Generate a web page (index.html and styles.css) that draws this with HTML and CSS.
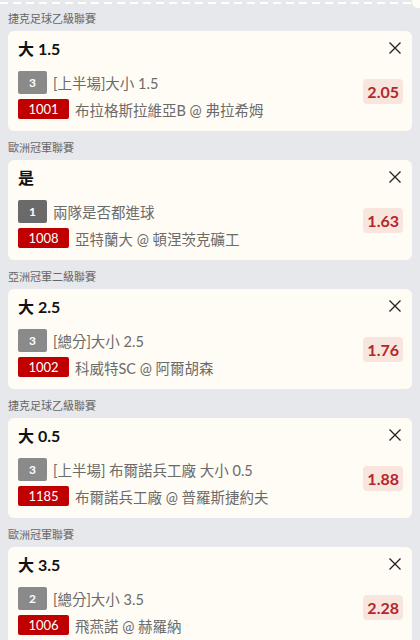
FILE: index.html
```html
<!DOCTYPE html>
<html lang="zh-Hant">
<head>
    <meta charset="UTF-8">
    <meta name="viewport" content="width=device-width, initial-scale=1.0">
    <title>投注單</title>
    <link rel="stylesheet" href="styles.css">
</head>
<body>
    <!-- Top edge of the previous block -->
    <div class="top-strip">
        <div class="dash-line"></div>
        <div class="top-edge"></div>
    </div>

    <div class="bet-list">
        <div class="bet-group">
            <div class="league">捷克足球乙級聯賽</div>
            <div class="bet-card">
                <div class="card-head">
                    <span class="pick">大 1.5</span>
                    <svg class="close-icon" viewBox="0 0 12 12"><path d="M0.5 0.5 L11.5 11.5 M11.5 0.5 L0.5 11.5"/></svg>
                </div>
                <div class="card-body">
                    <div class="lines">
                        <div class="line">
                            <span class="badge badge-gray">3</span>
                            <span class="line-text">[上半場]大小 1.5</span>
                        </div>
                        <div class="line line-match">
                            <span class="badge badge-red">1001</span>
                            <span class="line-text">布拉格斯拉維亞B @ 弗拉希姆</span>
                        </div>
                    </div>
                    <span class="odds">2.05</span>
                </div>
            </div>
        </div>

        <div class="bet-group">
            <div class="league">歐洲冠軍聯賽</div>
            <div class="bet-card">
                <div class="card-head">
                    <span class="pick">是</span>
                    <svg class="close-icon" viewBox="0 0 12 12"><path d="M0.5 0.5 L11.5 11.5 M11.5 0.5 L0.5 11.5"/></svg>
                </div>
                <div class="card-body">
                    <div class="lines">
                        <div class="line">
                            <span class="badge badge-dark">1</span>
                            <span class="line-text">兩隊是否都進球</span>
                        </div>
                        <div class="line line-match">
                            <span class="badge badge-red">1008</span>
                            <span class="line-text">亞特蘭大 @ 頓涅茨克礦工</span>
                        </div>
                    </div>
                    <span class="odds">1.63</span>
                </div>
            </div>
        </div>

        <div class="bet-group">
            <div class="league">亞洲冠軍二級聯賽</div>
            <div class="bet-card">
                <div class="card-head">
                    <span class="pick">大 2.5</span>
                    <svg class="close-icon" viewBox="0 0 12 12"><path d="M0.5 0.5 L11.5 11.5 M11.5 0.5 L0.5 11.5"/></svg>
                </div>
                <div class="card-body">
                    <div class="lines">
                        <div class="line">
                            <span class="badge badge-gray">3</span>
                            <span class="line-text">[總分]大小 2.5</span>
                        </div>
                        <div class="line line-match">
                            <span class="badge badge-red">1002</span>
                            <span class="line-text">科威特SC @ 阿爾胡森</span>
                        </div>
                    </div>
                    <span class="odds">1.76</span>
                </div>
            </div>
        </div>

        <div class="bet-group">
            <div class="league">捷克足球乙級聯賽</div>
            <div class="bet-card">
                <div class="card-head">
                    <span class="pick">大 0.5</span>
                    <svg class="close-icon" viewBox="0 0 12 12"><path d="M0.5 0.5 L11.5 11.5 M11.5 0.5 L0.5 11.5"/></svg>
                </div>
                <div class="card-body">
                    <div class="lines">
                        <div class="line">
                            <span class="badge badge-gray">3</span>
                            <span class="line-text">[上半場] 布爾諾兵工廠 大小 0.5</span>
                        </div>
                        <div class="line line-match">
                            <span class="badge badge-red">1185</span>
                            <span class="line-text">布爾諾兵工廠 @ 普羅斯捷約夫</span>
                        </div>
                    </div>
                    <span class="odds">1.88</span>
                </div>
            </div>
        </div>

        <div class="bet-group">
            <div class="league">歐洲冠軍聯賽</div>
            <div class="bet-card">
                <div class="card-head">
                    <span class="pick">大 3.5</span>
                    <svg class="close-icon" viewBox="0 0 12 12"><path d="M0.5 0.5 L11.5 11.5 M11.5 0.5 L0.5 11.5"/></svg>
                </div>
                <div class="card-body">
                    <div class="lines">
                        <div class="line">
                            <span class="badge badge-gray">2</span>
                            <span class="line-text">[總分]大小 3.5</span>
                        </div>
                        <div class="line line-match">
                            <span class="badge badge-red">1006</span>
                            <span class="line-text">飛燕諾 @ 赫羅納</span>
                        </div>
                    </div>
                    <span class="odds">2.28</span>
                </div>
            </div>
        </div>
    </div>
</body>
</html>
```

FILE: styles.css
```css
/* General Reset */
* {
    margin: 0;
    padding: 0;
    box-sizing: border-box;
}

body {
    font-family: 'Lato', 'Noto Sans CJK TC', sans-serif;
    background-color: #e6e8eb;
    color: #333;
    overflow: hidden;
}

/* Top strip */
.top-strip {
    display: flex;
    height: 10px;
}

.dash-line {
    flex: 1;
    height: 2px;
    margin-top: 2px;
    background: repeating-linear-gradient(90deg, #ffffff 0 8px, transparent 8px 13px);
}

.top-edge {
    width: 8px;
    height: 8px;
    background: #fffcf5;
    border-bottom-left-radius: 6px;
}

/* List */
.bet-list {
    padding: 0 8px;
}

.bet-group {
    margin-bottom: 8px;
}

.league {
    font-size: 11px;
    line-height: 18px;
    color: #666;
    margin-bottom: 3px;
}

.bet-card {
    background: #fffcf5;
    border-radius: 6px;
    padding: 8px 10px 12px 10px;
}

.card-head {
    display: flex;
    justify-content: space-between;
    align-items: center;
    height: 20px;
}

.pick {
    font-size: 16px;
    font-weight: 700;
    color: #111;
    line-height: 20px;
    padding-left: 0;
}

.close-icon {
    width: 12px;
    height: 12px;
    margin-right: 1px;
    margin-top: -3px;
    fill: none;
    stroke: #222;
    stroke-width: 1.3;
}

.card-body {
    display: flex;
    align-items: center;
    margin-top: 12px;
}

.lines {
    flex: 1;
}

.line {
    display: flex;
    align-items: center;
    gap: 6px;
    height: 23px;
}

.line-match {
    margin-top: 5px;
    height: 20px;
}

.line-text {
    font-size: 14.5px;
    color: #6b6b6b;
    white-space: nowrap;
}

.badge {
    display: flex;
    align-items: center;
    justify-content: center;
    color: #fff;
    border-radius: 2px;
    font-size: 12px;
}

.badge-gray,
.badge-dark {
    width: 29px;
    height: 23px;
    background: #8a8a8a;
    font-weight: 700;
}

.badge-dark {
    background: #6a6a6a;
}

.badge-red {
    width: 51px;
    height: 20px;
    background: #c00000;
    font-size: 13px;
}

.odds {
    margin-bottom: 8px;
    margin-right: -1px;
    padding: 0 4px;
    height: 25px;
    line-height: 25px;
    border-radius: 4px;
    background: #f8e6de;
    color: #b3262b;
    font-size: 16px;
    font-weight: 700;
}
```
